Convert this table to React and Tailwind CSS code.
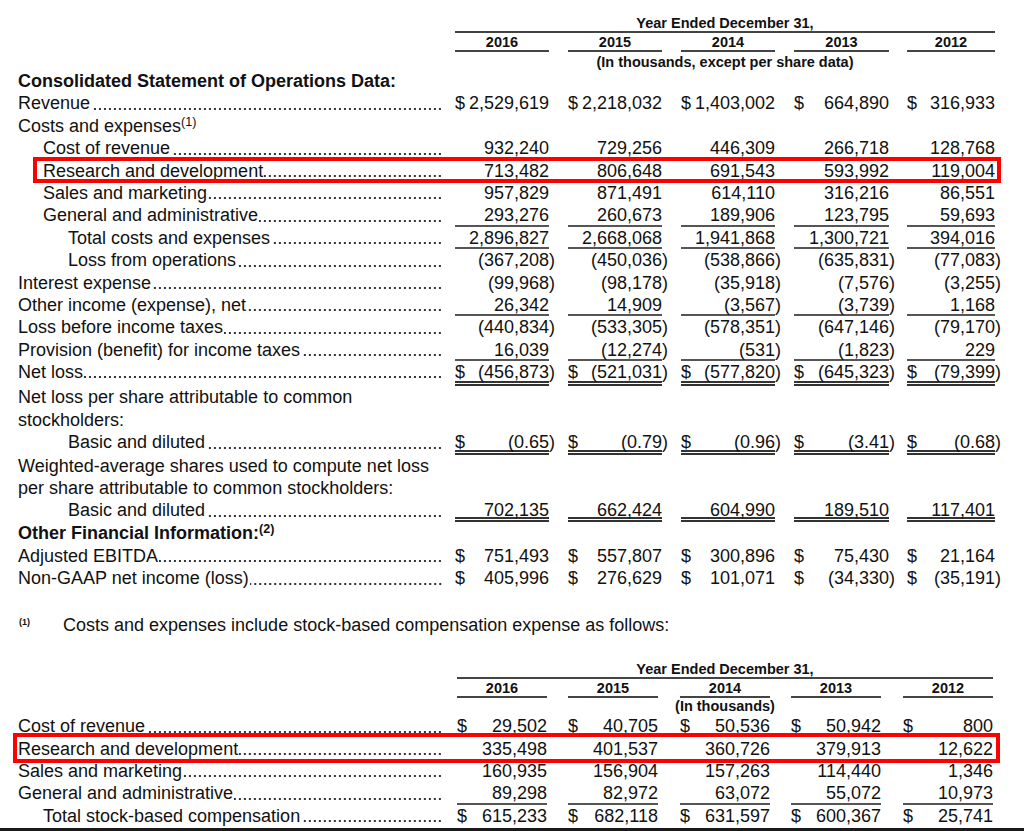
import React from "react";

const TOP_COLS = [
  "ml-[13px] w-[94px]",
  "ml-[19px] w-[94px]",
  "ml-[19px] w-[94px]",
  "ml-[19px] w-[95px]",
  "ml-[18px] w-[88px]",
];

const BOTTOM_COLS = [
  "ml-[15px] w-[90px]",
  "ml-[21px] w-[90px]",
  "ml-[22px] w-[90px]",
  "ml-[21px] w-[90px]",
  "ml-[22px] w-[90px]",
];

const YEARS = ["2016", "2015", "2014", "2013", "2012"];

const INDENT = ["pl-[18px]", "pl-[43px]", "pl-[68px]"];

const LINES = {
  single: "border-b-2 border-[#555]",
  double: "border-b-[5px] border-double border-[#333]",
};

const topRows = [
  { label: "Consolidated Statement of Operations Data:", bold: true },
  {
    label: "Revenue ",
    v: ["$2,529,619", "$2,218,032", "$1,403,002", "$ 664,890", "$ 316,933"],
  },
  {
    label: (
      <>
        Costs and expenses<sup className="text-[12.5px]">(1)</sup>
      </>
    ),
  },
  {
    label: "Cost of revenue ",
    ind: 1,
    v: ["932,240", "729,256", "446,309", "266,718", "128,768"],
  },
  {
    label: "Research and development",
    ind: 1,
    box: "top-[-2.6px] bottom-[-1px] left-[33px] right-[23px]",
    v: ["713,482", "806,648", "691,543", "593,992", "119,004"],
  },
  {
    label: "Sales and marketing",
    ind: 1,
    v: ["957,829", "871,491", "614,110", "316,216", "86,551"],
  },
  {
    label: "General and administrative",
    ind: 1,
    line: "single",
    v: ["293,276", "260,673", "189,906", "123,795", "59,693"],
  },
  {
    label: "Total costs and expenses ",
    ind: 2,
    line: "single",
    v: ["2,896,827", "2,668,068", "1,941,868", "1,300,721", "394,016"],
  },
  {
    label: "Loss from operations ",
    ind: 2,
    v: ["(367,208)", "(450,036)", "(538,866)", "(635,831)", "(77,083)"],
  },
  {
    label: "Interest expense ",
    v: ["(99,968)", "(98,178)", "(35,918)", "(7,576)", "(3,255)"],
  },
  {
    label: "Other income (expense), net ",
    line: "single",
    v: ["26,342", "14,909", "(3,567)", "(3,739)", "1,168"],
  },
  {
    label: "Loss before income taxes",
    v: ["(440,834)", "(533,305)", "(578,351)", "(647,146)", "(79,170)"],
  },
  {
    label: "Provision (benefit) for income taxes ",
    line: "single",
    v: ["16,039", "(12,274)", "(531)", "(1,823)", "229"],
  },
  {
    label: "Net loss",
    line: "double",
    h: "h-[25.4px]",
    v: ["$ (456,873)", "$ (521,031)", "$ (577,820)", "$ (645,323)", "$ (79,399)"],
  },
  { label: "Net loss per share attributable to common" },
  { label: "stockholders:" },
  {
    label: "Basic and diluted ",
    ind: 2,
    line: "double",
    h: "h-[23.4px]",
    v: ["$ (0.65)", "$ (0.79)", "$ (0.96)", "$ (3.41)", "$ (0.68)"],
  },
  { label: "Weighted-average shares used to compute net loss" },
  { label: "per share attributable to common stockholders:" },
  {
    label: "Basic and diluted ",
    ind: 2,
    line: "double",
    h: "h-[23px]",
    v: ["702,135", "662,424", "604,990", "189,510", "117,401"],
  },
  {
    label: (
      <>
        Other Financial Information:<sup className="text-[12.5px]">(2)</sup>
      </>
    ),
    bold: true,
  },
  {
    label: "Adjusted EBITDA",
    v: ["$ 751,493", "$ 557,807", "$ 300,896", "$ 75,430", "$ 21,164"],
  },
  {
    label: "Non-GAAP net income (loss)",
    v: ["$ 405,996", "$ 276,629", "$ 101,071", "$ (34,330)", "$ (35,191)"],
  },
];

const bottomRows = [
  {
    label: "Cost of revenue ",
    v: ["$ 29,502", "$ 40,705", "$ 50,536", "$ 50,942", "$ 800"],
  },
  {
    label: "Research and development",
    box: "top-[-4.9px] bottom-[-2.7px] left-[13px] right-[24px]",
    v: ["335,498", "401,537", "360,726", "379,913", "12,622"],
  },
  {
    label: "Sales and marketing",
    v: ["160,935", "156,904", "157,263", "114,440", "1,346"],
  },
  {
    label: "General and administrative",
    line: "single",
    v: ["89,298", "82,972", "63,072", "55,072", "10,973"],
  },
  {
    label: "Total stock-based compensation ",
    ind: 1,
    v: ["$ 615,233", "$ 682,118", "$ 631,597", "$ 600,367", "$ 25,741"],
  },
];

function Value({ text, col, line }) {
  const dollar = text.startsWith("$");
  const num = dollar ? text.slice(1).trim() : text;
  const neg = num.startsWith("(");
  return (
    <div className={`${col} ${line ? LINES[line] : ""} flex h-full justify-between`}>
      <span>{dollar ? "$" : ""}</span>
      {neg ? (
        <span className="-mr-[6px]">
          {num.slice(0, -1)}
          <span>)</span>
        </span>
      ) : (
        <span>{num}</span>
      )}
    </div>
  );
}

function Row({ row, cols }) {
  return (
    <div className={`relative flex items-start ${row.h || "h-[22.4px]"} leading-[22.4px]`}>
      <div className={`flex w-[442px] whitespace-nowrap ${INDENT[row.ind || 0]} ${row.bold ? "font-bold" : ""}`}>
        <span>{row.label}</span>
        {row.v && (
          // dot leader
          <span className="ml-[1px] flex-1 bg-[linear-gradient(to_right,#333_2px,transparent_2px)] bg-[length:5px_2px] bg-[position:right_-2px_bottom_5px] bg-repeat-x" />
        )}
      </div>
      {row.v &&
        row.v.map((t, i) => <Value key={i} text={t} col={cols[i]} line={row.line} />)}
      {row.box && <div className={`absolute ${row.box} border-4 border-[#f00]`} />}
    </div>
  );
}

function Header({ cols, spanW, lead, note }) {
  return (
    <div className="text-[14.5px] font-bold">
      <div className="flex">
        <div className={lead} />
        <div className={`${spanW} border-b-2 border-[#444] text-center leading-[15px]`}>
          Year Ended December 31,
        </div>
      </div>
      <div className="flex">
        <div className="w-[442px]" />
        {YEARS.map((y, i) => (
          <div
            key={y}
            className={`${cols[i]} border-b-2 border-[#444] pt-[2px] text-center leading-[15px]`}
          >
            {y}
          </div>
        ))}
      </div>
      <div className="flex">
        <div className={lead} />
        <div className={`${spanW} text-center leading-[16px] ${note.pad}`}>{note.text}</div>
      </div>
    </div>
  );
}

export default function App() {
  return (
    <div className="w-[1024px] h-[831px] overflow-hidden bg-white font-['Liberation_Sans',Arial,sans-serif] text-[18px] text-[#111]">
      <div className="pt-[16px]">
        <Header
          cols={TOP_COLS}
          lead="w-[455px]"
          spanW="w-[540px]"
          note={{ text: "(In thousands, except per share data)", pad: "pt-[2px]" }}
        />
        {topRows.map((r, i) => (
          <Row key={i} row={r} cols={TOP_COLS} />
        ))}
      </div>

      <div className="mt-[24px] flex h-[22.4px] leading-[22.4px]">
        <div className="w-[63px] pl-[19px] pt-[1px] text-[9px] font-bold leading-[14px]">(1)</div>
        <div>Costs and expenses include stock-based compensation expense as follows:</div>
      </div>

      <div className="mt-[26.3px]">
        <Header
          cols={BOTTOM_COLS}
          lead="w-[457px]"
          spanW="w-[536px]"
          note={{ text: "(In thousands)", pad: "" }}
        />
        <div className="mt-[1px]">
          {bottomRows.map((r, i) => (
            <Row key={i} row={r} cols={BOTTOM_COLS} />
          ))}
        </div>
      </div>

      <div className="mt-[0.5px] h-[3px] bg-[#1a1a1a]" />
    </div>
  );
}
